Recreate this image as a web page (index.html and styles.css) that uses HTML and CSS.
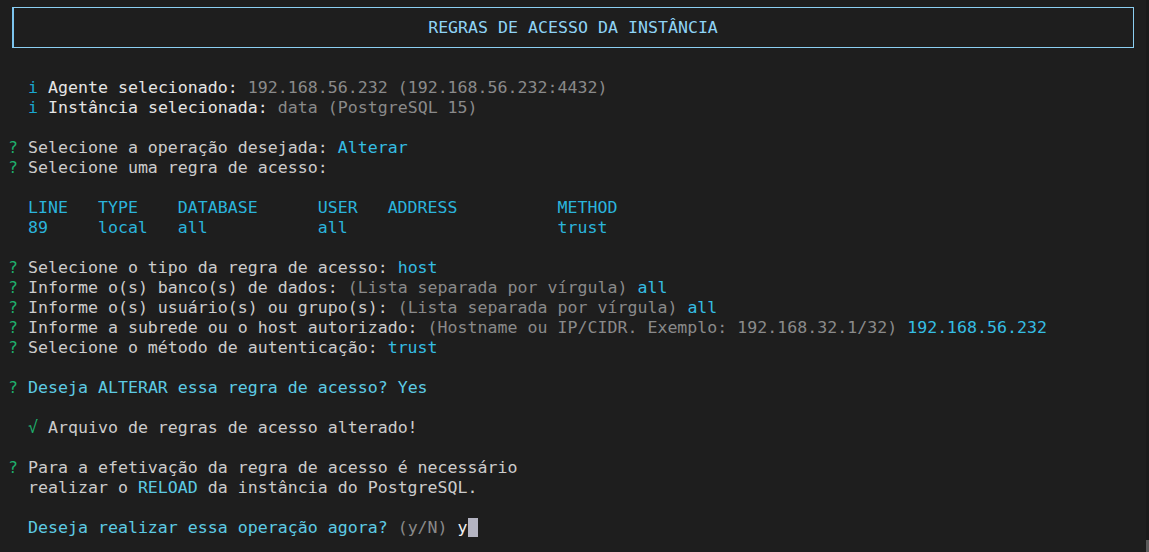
FILE: index.html
```html
<!DOCTYPE html>
<html>
<head>
    <meta charset="UTF-8">
    <meta name="viewport" content="width=device-width, initial-scale=1.0">
    <title>Regras de acesso da instância</title>
    <link rel="stylesheet" href="styles.css">
</head>
<body>
    <div class="terminal">
        <div class="title-box">REGRAS DE ACESSO DA INSTÂNCIA</div>

        <div class="row">  <span class="info">i</span> <span class="label">Agente selecionado:</span> <span class="muted">192.168.56.232 (192.168.56.232:4432)</span></div>
        <div class="row">  <span class="info">i</span> <span class="label">Instância selecionada:</span> <span class="muted">data (PostgreSQL 15)</span></div>
        <div class="row"></div>
        <div class="row"><span class="ask">?</span> Selecione a operação desejada: <span class="answer">Alterar</span></div>
        <div class="row"><span class="ask">?</span> Selecione uma regra de acesso:</div>
        <div class="row"></div>
        <div class="row table">  LINE   TYPE    DATABASE      USER   ADDRESS          METHOD</div>
        <div class="row table">  89     local   all           all                     trust</div>
        <div class="row"></div>
        <div class="row"><span class="ask">?</span> Selecione o tipo da regra de acesso: <span class="answer">host</span></div>
        <div class="row"><span class="ask">?</span> Informe o(s) banco(s) de dados: <span class="muted">(Lista separada por vírgula)</span> <span class="answer">all</span></div>
        <div class="row"><span class="ask">?</span> Informe o(s) usuário(s) ou grupo(s): <span class="muted">(Lista separada por vírgula)</span> <span class="answer">all</span></div>
        <div class="row"><span class="ask">?</span> Informe a subrede ou o host autorizado: <span class="muted">(Hostname ou IP/CIDR. Exemplo: 192.168.32.1/32)</span> <span class="answer">192.168.56.232</span></div>
        <div class="row"><span class="ask">?</span> Selecione o método de autenticação: <span class="answer">trust</span></div>
        <div class="row"></div>
        <div class="row"><span class="ask">?</span> <span class="confirm">Deseja ALTERAR essa regra de acesso? Yes</span></div>
        <div class="row"></div>
        <div class="row">  <span class="ask">√</span> Arquivo de regras de acesso alterado!</div>
        <div class="row"></div>
        <div class="row"><span class="ask">?</span> Para a efetivação da regra de acesso é necessário</div>
        <div class="row">  realizar o <span class="confirm">RELOAD</span> da instância do PostgreSQL.</div>
        <div class="row"></div>
        <div class="row">  <span class="confirm">Deseja realizar essa operação agora?</span> <span class="muted">(y/N)</span> <span class="typed">y</span><span class="cursor"> </span></div>
    </div>
    <div class="scrollbar"><div class="thumb"></div></div>
</body>
</html>
```
FILE: styles.css
```css
body {
    margin: 0;
    background-color: #1e1e1e;
    color: #cccccc;
    font-family: "DejaVu Sans Mono", "Liberation Mono", monospace;
    font-size: 16.6px;
    line-height: 20px;
    overflow: hidden;
}
.terminal {
    padding: 0 0 0 8px;
}
.title-box {
    margin: 7px 0 30px 4px;
    width: 1122px;
    height: 41px;
    box-sizing: border-box;
    padding: 10px 1px 0 0;
    border: 1px solid #8ccff2;
    border-left: 2px solid #7cc4ee;
    color: #8fd4f6;
    text-align: center;
}
.row {
    height: 20px;
    white-space: pre;
}
.info {
    color: #1aa7cf;
}
.label {
    color: #e5e5e5;
}
.muted {
    color: #8a8a8a;
}
.ask {
    color: #1fae6c;
}
.answer {
    color: #35bde3;
}
.table {
    color: #2bb4dc;
}
.confirm {
    color: #5dcbe4;
}
.typed {
    color: #f0f0f0;
}
.cursor {
    background: #b4b4c2;
}
.scrollbar {
    position: absolute;
    top: 0;
    right: 0;
    width: 3px;
    height: 552px;
    background: #1a1a1a;
}
.thumb {
    position: absolute;
    bottom: 0;
    right: 0;
    width: 3px;
    height: 12px;
    background: #5a5a5a;
}
```
